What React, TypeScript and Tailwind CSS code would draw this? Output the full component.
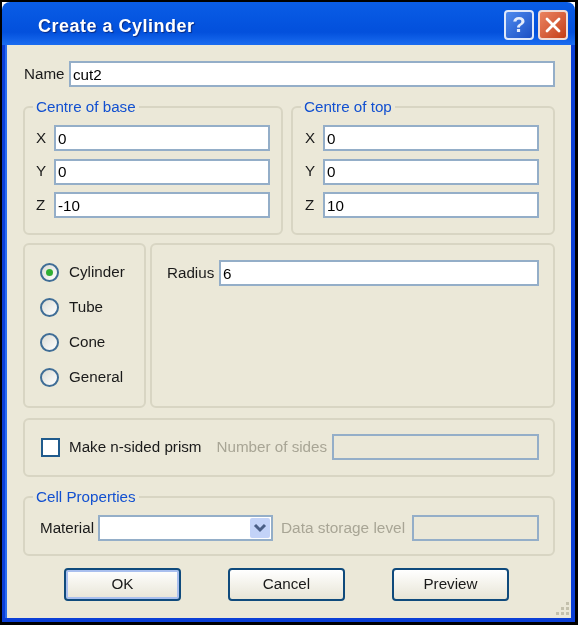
import type { ReactNode } from 'react'

const font = "font-['Liberation_Sans',Arial,sans-serif]"

function Field({ value = '', className = '', disabled = false }: { value?: string; className?: string; disabled?: boolean }) {
  return (
    <input
      readOnly
      value={value}
      className={`h-[26px] border-2 border-[#94aec8] pl-[2px] text-[15.2px] text-black outline-none ${
        disabled ? 'bg-[#ebe8d8]' : 'bg-white'
      } ${className}`}
    />
  )
}

function Group({ title, className = '', children }: { title?: string; className?: string; children: ReactNode }) {
  return (
    <fieldset className={`rounded-[6px] border-2 border-[#d8d5c3] ${className}`}>
      {title && <legend className="ml-[8px] h-[20px] whitespace-nowrap px-[3px] text-[15.2px] leading-[20px] text-[#1250d0]">{title}</legend>}
      {children}
    </fieldset>
  )
}

function CoordRow({ axis, value }: { axis: string; value: string }) {
  return (
    <div className="flex h-[26px] items-center">
      <span className="w-[18px] text-[15.2px] text-[#1a1a1a]">{axis}</span>
      <Field value={value} className="w-[216px]" />
    </div>
  )
}

function Coords({ title, values, className, inner }: { title: string; values: string[]; className: string; inner: string }) {
  return (
    <Group title={title} className={className}>
      <div className={`flex flex-col gap-[7.5px] pt-[8px] ${inner}`}>
        <CoordRow axis="X" value={values[0]} />
        <CoordRow axis="Y" value={values[1]} />
        <CoordRow axis="Z" value={values[2]} />
      </div>
    </Group>
  )
}

function Radio({ label, checked = false }: { label: string; checked?: boolean }) {
  return (
    <div className="flex h-[19px] items-center gap-[10px]">
      <span className="flex h-[19px] w-[19px] items-center justify-center rounded-full border-2 border-[#3f6d96] bg-gradient-to-br from-[#dcdcd4] to-white">
        {checked && <span className="h-[7px] w-[7px] rounded-full bg-[#2fae34]" />}
      </span>
      <span className="text-[15.2px] text-[#1a1a1a]">{label}</span>
    </div>
  )
}

function Button({ label, isDefault = false }: { label: string; isDefault?: boolean }) {
  return (
    <button
      className={`h-[33px] w-[117px] rounded-[4px] border-2 border-[#0f4a7c] bg-gradient-to-b from-white to-[#e8e5d6] text-[15.2px] text-[#1a1a1a] ${
        isDefault ? 'shadow-[inset_0_0_0_2px_#a9bfee]' : ''
      }`}
    >
      {label}
    </button>
  )
}

export default function App() {
  return (
    <div className={`h-[625px] w-[578px] bg-black pb-[3px] pl-[2px] pr-[3px] pt-[2px] ${font}`}>
      <div className="flex h-full flex-col overflow-hidden bg-white blur-[0.4px]">
        {/* Title bar */}
        <div className="flex h-[43px] shrink-0 items-center justify-between rounded-t-[8px] bg-gradient-to-b from-[#0a5de6] via-[#0350dc] via-70% to-[#1a6cf0] pl-[36px] pr-[7px] pt-[3px]">
          <span className="pt-[2px] text-[18px] font-bold tracking-[0.5px] text-white [text-shadow:1px_1px_1px_#0a2a80]">
            Create a Cylinder
          </span>
          <div className="flex gap-[4px]">
            <div className="flex h-[30px] w-[30px] items-center justify-center rounded-[4px] border-2 border-[#dfe8fa] bg-gradient-to-br from-[#4f8aee] to-[#1c4fc4] text-[22px] font-bold leading-none text-[#e4ecfb]">
              ?
            </div>
            <div className="flex h-[30px] w-[30px] items-center justify-center rounded-[4px] border-2 border-[#f1dcd4] bg-gradient-to-br from-[#ea8461] to-[#c43c12]">
              <svg width="18" height="18" viewBox="0 0 18 18">
                <path d="M3 3 L15 15 M15 3 L3 15" stroke="white" strokeWidth="2.8" strokeLinecap="round" />
              </svg>
            </div>
          </div>
        </div>

        <div className="flex flex-1 flex-col bg-[#0b3fd6] pb-[4px] pl-[3px] pr-[4px]">
          {/* Client area */}
          <div className="relative flex flex-1 flex-col border-l-2 border-[#2a6cf0] bg-[#ebe8d8] px-[16px] pt-[16px]">
            <div className="flex h-[26px] items-center">
              <span className="ml-[1px] w-[45px] text-[15.2px] text-[#1a1a1a]">Name</span>
              <Field value="cut2" className="w-[486px]" />
            </div>

            <div className="mt-[10px] flex gap-[8px]">
              <Coords title="Centre of base" values={['0', '0', '-10']} className="h-[138px] w-[260px]" inner="pl-[11px]" />
              <Coords title="Centre of top" values={['0', '0', '10']} className="h-[138px] w-[264px]" inner="pl-[12px]" />
            </div>

            <div className="mt-[8px] flex gap-[4px]">
              <Group className="h-[165px] w-[123px]">
                <div className="flex flex-col gap-[16px] pl-[15px] pt-[18px]">
                  <Radio label="Cylinder" checked />
                  <Radio label="Tube" />
                  <Radio label="Cone" />
                  <Radio label="General" />
                </div>
              </Group>
              <Group className="h-[165px] w-[405px]">
                <div className="flex items-center pl-[15px] pt-[15px]">
                  <span className="w-[52px] text-[15.2px] text-[#1a1a1a]">Radius</span>
                  <Field value="6" className="w-[320px]" />
                </div>
              </Group>
            </div>

            <Group className="mt-[10px] h-[59px]">
              <div className="flex items-center whitespace-nowrap pl-[16px] pr-[14px] pt-[14px]">
                <span className="h-[19px] w-[19px] shrink-0 border-2 border-[#1f5a8c] bg-white" />
                <span className="ml-[9px] text-[15.2px] text-[#1a1a1a]">Make n-sided prism</span>
                <span className="ml-[15px] text-[15.2px] text-[#a8a595]">Number of sides</span>
                <Field disabled className="ml-auto w-[207px]" />
              </div>
            </Group>

            <Group title="Cell Properties" className="mt-[10px] h-[69px]">
              <div className="flex items-center whitespace-nowrap pl-[15px] pt-[8px]">
                <span className="w-[58px] text-[15.2px] text-[#1a1a1a]">Material</span>
                <div className="flex h-[26px] w-[175px] shrink-0 items-center justify-end border-2 border-[#94aec8] bg-white pr-[1px]">
                  <div className="flex h-[20px] w-[20px] items-center justify-center rounded-[2px] bg-[#c3d3f8]">
                    <svg width="14" height="10" viewBox="0 0 14 10">
                      <path d="M2 2 L7 7 L12 2" fill="none" stroke="#4a5f86" strokeWidth="3" />
                    </svg>
                  </div>
                </div>
                <span className="ml-[8px] w-[131px] text-[15.4px] text-[#a8a595]">Data storage level</span>
                <Field disabled className="w-[127px]" />
              </div>
            </Group>

            <div className="mt-[12px] flex pl-[41px]">
              <Button label="OK" isDefault />
              <div className="ml-[47px]">
                <Button label="Cancel" />
              </div>
              <div className="ml-[47px]">
                <Button label="Preview" />
              </div>
            </div>

            {/* Resize grip */}
            <svg className="absolute bottom-0 right-0" width="18" height="18" viewBox="0 0 18 18">
              <g fill="#c4c1ad">
                <rect x="13" y="2" width="3" height="3" />
                <rect x="8" y="7" width="3" height="3" />
                <rect x="13" y="7" width="3" height="3" />
                <rect x="3" y="12" width="3" height="3" />
                <rect x="8" y="12" width="3" height="3" />
                <rect x="13" y="12" width="3" height="3" />
              </g>
            </svg>
          </div>
        </div>
      </div>
    </div>
  )
}
